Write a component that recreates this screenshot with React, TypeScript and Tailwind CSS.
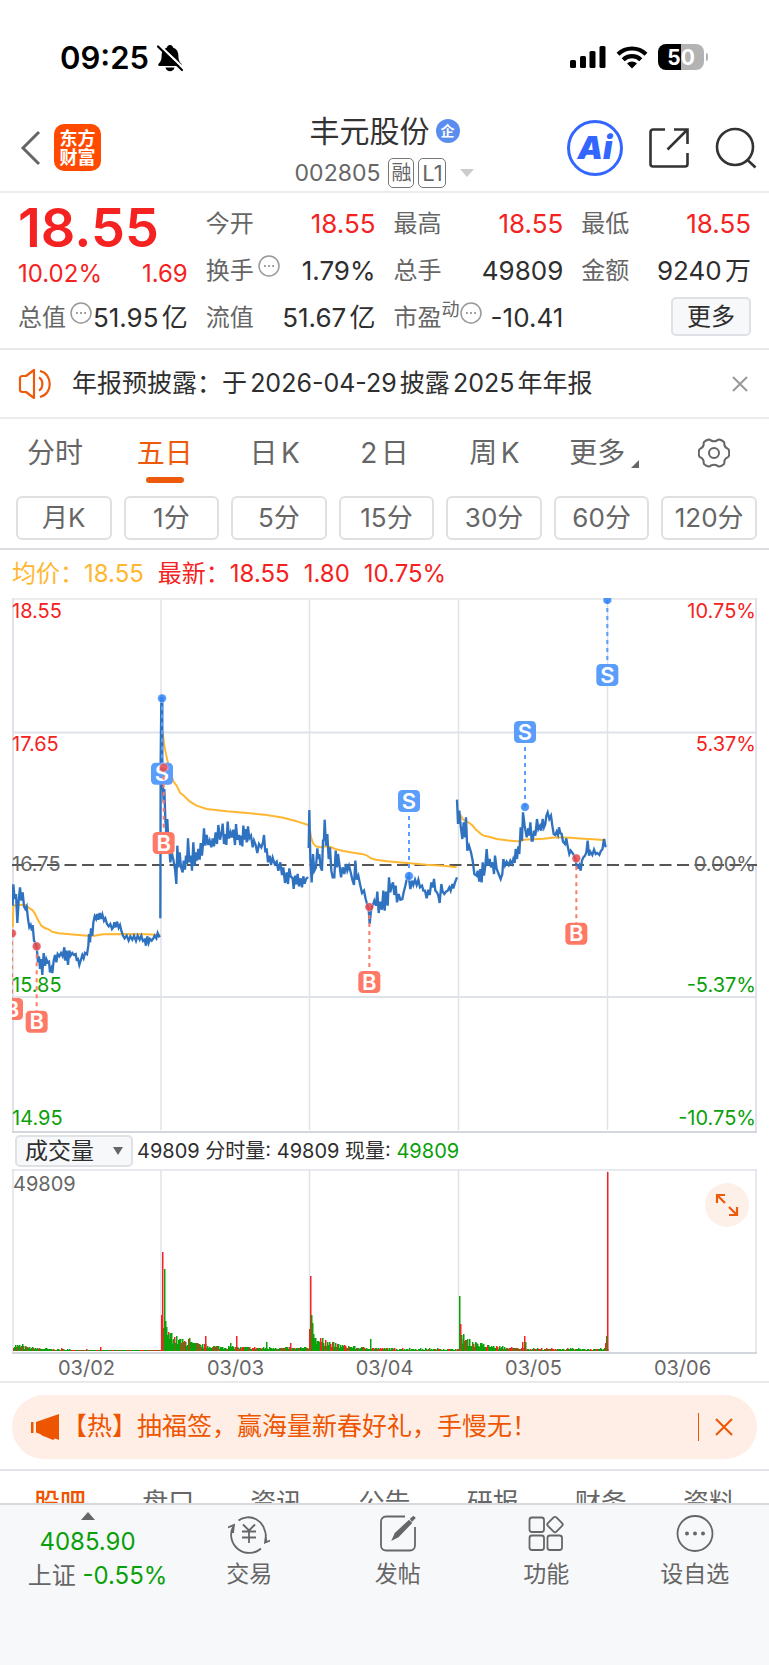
import type { ReactNode } from "react";

const RED = "#f52222";
const GREEN = "#0aa00a";
const BLUE = "#2f72c0";
const AMBER = "#ffb732";

type Session = { shift: string; price: string; average: string };

const sessions: Session[] = [
  {
    shift: "translate(0 690)",
    price:
      "38,260 40,196 44,240 48,225 52,312 56,245 60,205 64,245 68,220 72,262 76,270 80,262 84,300 88,325 92,318 96,335 98,318 102,365 106,372 110,385 114,430 117,412 120,450 123,420 127,468 131,402 135,440 139,420 143,430 147,428 150,460 154,448 157,462 161,425 165,408 169,430 173,405 178,412 183,402 188,412 193,385 196,425 200,395 204,438 208,395 212,410 217,402 222,408 227,405 230,422 234,420 238,438 242,425 247,408 251,418 255,402 261,406 265,380 267,345 270,370 273,328 277,350 280,310 284,292 288,300 291,285 295,302 299,282 303,300 307,286 312,305 316,298 321,315 326,322 331,315 336,330 340,325 343,310 347,325 351,308 356,326 360,318 364,335 369,350 374,358 380,350 386,365 391,352 397,362 402,350 408,366 413,350 419,362 424,350 429,366 434,362 438,380 442,352 446,372 450,360 455,365 460,358 464,350 469,358 473,342 477,352 481,350",
    average:
      "38,325 40,262 46,258 78,258 86,266 98,274 106,286 114,303 124,320 136,328 144,330 156,338 176,343 210,346 262,350 284,350 308,346 380,345 440,346 481,348",
  },
  {
    shift: "translate(0 0)",
    price:
      "481,988 482,520 484,328 487,328 487,560 491,640 493,600 496,690 499,735 502,690 505,760 508,780 511,820 515,790 520,812 525,840 529,885 532,770 535,835 539,790 543,835 548,850 551,815 555,842 558,800 561,825 564,748 568,820 573,800 576,845 580,760 584,830 588,790 591,815 595,780 599,812 602,762 606,800 609,765 612,718 616,770 620,738 625,768 629,755 634,775 638,748 642,772 647,730 651,765 655,708 660,752 665,730 668,704 672,765 676,735 679,768 683,698 687,748 692,730 696,745 700,722 705,768 708,705 712,752 717,738 721,768 724,740 727,772 730,710 734,752 737,720 740,760 744,712 748,748 753,740 758,775 762,755 767,768 772,792 777,765 784,775 789,760 792,738 796,790 800,778 804,820 809,800 813,828 818,806 824,825 830,818 835,845 841,820 846,858 850,835 855,882 860,850 864,885 868,838 872,862 878,868 881,900 885,860 889,886 893,855 897,892 902,868 906,895 910,862 914,884 918,870 924,864",
    average:
      "488,430 493,470 499,500 506,530 514,560 522,580 530,590 540,611 550,619 570,638 590,650 620,660 680,667 750,673 800,678 850,686 890,697 925,708",
  },
  {
    shift: "translate(900 510)",
    price:
      "26,267 28,153 31,300 35,370 39,285 43,335 48,325 52,268 55,300 58,285 62,325 66,335 69,245 72,240 74,182 78,260 82,225 86,300 90,265 94,335 98,355 103,355 107,275 111,325 114,285 119,322 123,355 128,325 133,345 138,315 142,335 147,320 152,340 157,362 162,378 166,305 170,362 175,350 180,375 186,402 192,395 197,420 202,438 206,450 209,495 213,455 218,440 223,425 228,440 232,398 236,462 241,428 246,452 250,395 254,455 258,398 263,440 267,355 271,400 275,380 279,370 283,408 287,380 291,430 296,405 301,422 307,420 311,400 316,380 320,362 326,352 331,390 336,365 340,378 345,362 350,378 355,362 360,385 366,380 370,395 375,395 380,418 385,392 389,408 394,370 398,385 402,360 406,395 411,400 415,410 419,432 424,375 428,398 433,405 438,398 443,395 448,385 452,395 457,375 460,388 465,370 471,355",
    average:
      "30,215 34,238 40,254 48,262 62,265 76,262 92,264 106,270 130,276 160,281 190,286 202,290 212,298 228,302 260,307 320,312 380,317 430,320 470,325",
  },
  {
    shift: "translate(900 510)",
    price:
      "471,122 474,195 478,155 482,200 487,240 491,190 495,235 498,175 502,275 507,260 513,280 518,305 523,345 530,350 533,335 538,368 541,330 545,370 548,310 552,350 556,320 560,270 564,320 569,300 573,325 578,310 582,345 585,290 590,330 596,345 602,360 607,345 610,300 615,320 620,308 626,318 631,305 636,315 640,300 644,312 647,270 651,300 655,262 658,285 662,205 666,245 669,160 674,200 680,235 685,208 688,230 691,190 695,245 698,245 702,215 706,230 711,180 715,210 720,200 724,215 728,180 732,205 736,195 739,170 743,160 748,180 753,170 757,200 761,225 766,228 770,218 774,228 777,205 781,222 785,225 789,248 795,255 799,238 803,262 808,285 812,275 820,285 826,300 830,320 834,325 838,318 842,335 846,305 850,295 855,290 859,280 863,245 867,290 871,278 877,288 882,272 887,285 892,282 898,288 903,275 907,272 912,240 917,265",
    average:
      "480,165 488,180 496,186 505,190 516,198 530,214 544,226 552,230 570,234 590,240 620,244 650,247 665,246 672,242 700,241 730,239 770,235 810,236 850,239 880,241 917,244",
  },
];

type Trade = { side: "B" | "S"; x: number; from: number; to: number };

const trades: Trade[] = [
  { side: "B", x: 36, from: 1033, to: 1260 },
  { side: "B", x: 110, from: 1072, to: 1298 },
  { side: "S", x: 486, from: 328, to: 554 },
  { side: "B", x: 491, from: 536, to: 762 },
  { side: "B", x: 1108, from: 954, to: 1179 },
  { side: "S", x: 1227, from: 861, to: 636 },
  { side: "S", x: 1575, from: 654, to: 429 },
  { side: "B", x: 1729, from: 808, to: 1034 },
  { side: "S", x: 1822, from: 33, to: 258 },
];

function TradeMark({ side, x, from, to }: Trade) {
  const color = side === "B" ? "#ff7a66" : "#5a9dfb";
  const dot = side === "B" ? "#e0484c" : "#2f83f5";
  return (
    <g>
      <line x1={x} x2={x} y1={from} y2={to} stroke={color} strokeWidth="6" strokeDasharray="12 12" />
      <circle cx={x} cy={from} r="13" fill={dot} fillOpacity="0.85" stroke="#fff" strokeOpacity="0.6" strokeWidth="2" />
      <rect x={x - 33} y={to - 33} width="66" height="66" rx="13" fill={color} />
      <text x={x} y={to + 23} textAnchor="middle" fontSize="66" fontWeight="600" fill="#fff">
        {side}
      </text>
    </g>
  );
}

const axisLabels = [
  { y: 20, left: "18.55", right: "10.75%", color: RED },
  { y: 153, left: "17.65", right: "5.37%", color: RED },
  { y: 273, left: "16.75", right: "0.00%", color: "#666" },
  { y: 394, left: "15.85", right: "-5.37%", color: GREEN },
  { y: 527, left: "14.95", right: "-10.75%", color: GREEN },
];

function PriceChart() {
  return (
    <svg viewBox="0 0 745 535" className="block h-auto w-full" role="img" aria-label="五日走势">
      <g stroke="#e0e2ea" strokeWidth="2">
        <path d="M0 1H745" stroke="#ececec" />
        <path d="M1 0V534M744 0V534" />
        <path d="M0 134.500H745M0 399H745" />
        <path d="M149 2V532M297.500 2V532M446.500 2V532M595.500 2V532" strokeWidth="1.500" />
        <path d="M0 534H745" stroke="#d4d6de" />
      </g>
      <path d="M0 267H745" stroke="#555" strokeWidth="2" strokeDasharray="12 5.500" />
      {axisLabels.map((l) => (
        <g key={l.left} fontSize="20" fill={l.color}>
          <text x="0" y={l.y}>{l.left}</text>
          <text x="744" y={l.y} textAnchor="end">{l.right}</text>
        </g>
      ))}
      <g transform="translate(-12 -9) scale(0.333333)">
        {sessions.map((s, i) => (
          <g key={i} transform={s.shift} fill="none">
            <polyline points={s.average} stroke={AMBER} strokeWidth="6" strokeLinejoin="round" />
            <polyline points={s.price} stroke={BLUE} strokeWidth="7" />
          </g>
        ))}
        {trades.map((t) => (
          <TradeMark key={`${t.side}${t.x}`} {...t} />
        ))}
      </g>
    </svg>
  );
}

// [x, height, up] for the bars that stand out of the floor
const peaks: [number, number, boolean][] = [
  [10, 7, false], [49, 3, true], [88, 4, true],
  [149, 36, true], [150, 99, true], [152, 82, false], [153, 30, false], [154, 24, false], [156, 17, false],
  [159, 18, false], [161, 12, false], [167, 12, false], [176, 12, true], [177, 13, false], [193, 15, true],
  [218, 8, false], [224, 15, true], [254, 9, false], [278, 8, true],
  [297, 22, true], [298, 75, true], [299, 36, false], [300, 28, false], [301, 17, false], [303, 13, false],
  [313, 11, true], [358, 12, false], [447, 55, false], [448, 27, true], [449, 16, false], [451, 17, false],
  [453, 11, true], [464, 8, false], [469, 8, false], [510, 9, true], [512, 15, true], [513, 9, false],
  [593, 8, true], [594, 15, false],
];

const floors: [number, number, number][] = [
  // start, height at start, height it settles to
  [1, 6, 1],
  [150, 20, 3],
  [299, 15, 2],
  [448, 13, 2],
];

function buildBars() {
  const bars: { x: number; h: number; up: boolean }[] = [];
  let seed = 7;
  const rand = () => {
    seed = (seed * 16807) % 2147483647;
    return seed / 2147483647;
  };
  for (const [start, high, low] of floors) {
    for (let i = 0; i < 148; i++) {
      const base = low + (high - low) * Math.exp(-i / 22);
      bars.push({ x: start + i, h: Math.max(1, Math.round(base * (0.5 + rand() * 0.8))), up: rand() > 0.7 });
    }
  }
  for (const [x, h, up] of peaks) bars.push({ x, h, up });
  return bars;
}

const bars = buildBars();

function VolumeChart() {
  return (
    <svg viewBox="0 0 745 185" className="block h-auto w-full" role="img" aria-label="成交量">
      <g stroke="#e0e2ea" strokeWidth="1.500">
        <path d="M0 1H745M1 0V184M744 0V184" />
        <path d="M149 2V182M297.500 2V182M446.500 2V182M595.500 2V182" />
        <path d="M0 184H745" stroke="#d4d6de" strokeWidth="2" />
      </g>
      {bars.map((b, i) => (
        <rect key={i} x={b.x} y={182 - b.h} width="1.500" height={b.h} fill={b.up ? RED : GREEN} />
      ))}
      <rect x="595" y="3" width="1.500" height="179" fill={RED} />
      <text x="1" y="22" fontSize="20" fill="#666">49809</text>
    </svg>
  );
}

function MoreDots() {
  return (
    <svg viewBox="0 0 22 22" className="size-[22px] shrink-0" fill="none" stroke="#999" strokeWidth="1.500">
      <circle cx="11" cy="11" r="10" />
      <path d="M6 11h1.800M10.100 11h1.800M14.200 11H16" strokeWidth="2" />
    </svg>
  );
}

type QuoteProps = { label: string; value: string; up?: boolean; sup?: string; dots?: boolean };

function Quote({ label, value, up, sup, dots }: QuoteProps) {
  return (
    <div className="flex h-[47px] items-center whitespace-nowrap">
      <dt className="flex items-center text-2xl text-[#666]">
        {label}
        {sup && <sup className="top-[-8px] text-lg leading-none">{sup}</sup>}
        {dots && (
          <span className={sup ? "-mt-2.5" : "-mt-2.5 ml-1"}>
            <MoreDots />
          </span>
        )}
      </dt>
      <dd className={up ? "ml-auto text-[26px] text-[#f52222]" : "ml-auto text-[26px] text-[#2e2e2e]"}>{value}</dd>
    </div>
  );
}

function StatusBar() {
  return (
    <div className="flex h-[110px] items-center justify-between pr-[61px] pl-[60px] text-black">
      <div className="flex items-center gap-2 pt-1.5">
        <span className="text-[31px] leading-10 font-semibold">09:25</span>
        <svg viewBox="0 0 26 28" className="h-7 w-[26px]">
          <path d="M13 1c1.800 0 2.800 1 3 2.400 3.600 1.200 5.400 4.300 5.400 8.100 0 5 1.300 6.500 3 8.200.8.900.4 2.300-1 2.300H2.600c-1.400 0-1.800-1.400-1-2.300 1.700-1.700 3-3.200 3-8.200 0-3.800 1.800-6.900 5.400-8.100C10.200 2 11.200 1 13 1Z" />
          <path d="M8.500 23.500h9c-.6 2.500-2.300 3.800-4.500 3.800s-3.900-1.300-4.500-3.800Z" />
          <path d="M2.500 1.500 26.500 24" stroke="#fff" strokeWidth="2.400" />
          <path d="M1 2.500 25 26" stroke="#000" strokeWidth="2.200" strokeLinecap="round" />
        </svg>
      </div>
      <div className="flex items-center gap-2.5 pt-1">
        <svg viewBox="0 0 36 24" className="h-6 w-9">
          <rect x="0" y="15" width="6" height="8" rx="1.500" />
          <rect x="10" y="11" width="6" height="12" rx="1.500" />
          <rect x="19.500" y="6" width="6" height="17" rx="1.500" />
          <rect x="29.500" y="1" width="6" height="22" rx="1.500" />
        </svg>
        <svg viewBox="0 0 32 24" className="h-6 w-8" fill="none" stroke="#000" strokeWidth="4.200">
          <path d="M2 9.200a20 20 0 0 1 28 0" />
          <path d="M7.200 14.800a12.600 12.600 0 0 1 17.600 0" />
          <path d="m16 23.500-5-5a7 7 0 0 1 10 0Z" fill="#000" stroke="none" />
        </svg>
        <div className="flex items-center gap-0.5">
          <div className="flex h-[26px] w-[46px] items-center justify-center rounded-lg bg-linear-to-r from-black from-50% to-[#b3b3b3] to-50% text-[21px] leading-none font-bold text-white">
            50
          </div>
          <span className="h-2 w-0.5 rounded-r bg-[#b3b3b3]" />
        </div>
      </div>
    </div>
  );
}

function Header() {
  return (
    <header className="grid h-[83px] grid-cols-[1fr_auto_1fr] items-center border-b-2 border-[#ececec] px-3">
      <div className="flex items-center gap-3 pb-1.5 pl-2">
        <button aria-label="返回">
          <svg viewBox="0 0 22 36" className="h-9 w-[22px]" fill="none" stroke="#666" strokeWidth="3">
            <path d="M19 2 3 18l16 16" />
          </svg>
        </button>
        <div className="flex size-[47px] items-center justify-center rounded-[10px] bg-[#ff4a00] text-center text-lg leading-[19px] font-bold text-white">
          东方
          <br />
          财富
        </div>
      </div>
      <div className="flex flex-col items-center">
        <h1 className="flex items-center gap-1.5 pb-1 text-[30px] leading-10 text-[#333]">
          丰元股份
          <span className="flex size-6 items-center justify-center rounded-full bg-[#5b8def] text-sm font-bold text-white">
            企
          </span>
        </h1>
        <div className="flex items-center gap-1 text-[23px] leading-9 text-[#666]">
          <span className="mr-1">002805</span>
          <span className="flex h-[30px] w-[26px] items-center justify-center rounded-[5px] border border-[#777] text-xl">融</span>
          <span className="flex h-[30px] w-7 items-center justify-center rounded-[5px] border border-[#777] text-[22px]">L1</span>
          <svg viewBox="0 0 14 8" className="ml-2.5 h-2 w-3.5">
            <path d="M0 0h14L7 8Z" fill="#ccc" />
          </svg>
        </div>
      </div>
      <div className="flex items-center justify-end gap-[26px] pb-1.5">
        <button className="flex size-14 items-center justify-center rounded-full border-3 border-[#3366ff] text-[32px] font-black text-[#3366ff] italic">
          Ai
        </button>
        <button aria-label="分享">
          <svg viewBox="0 0 40 40" className="size-10" fill="none" stroke="#333" strokeWidth="2.600">
            <path d="M16 1.500H4A2.500 2.500 0 0 0 1.500 4v32A2.500 2.500 0 0 0 4 38.500h32a2.500 2.500 0 0 0 2.500-2.500V25" />
            <path d="M25 1.500h13.500V16M38 2 18.500 21.500" />
          </svg>
        </button>
        <button aria-label="搜索">
          <svg viewBox="0 0 42 42" className="size-[42px]" fill="none" stroke="#333" strokeWidth="2.600">
            <circle cx="20" cy="20" r="18" />
            <path d="m32.500 33 8 7.500" />
          </svg>
        </button>
      </div>
    </header>
  );
}

function QuoteBoard() {
  return (
    <section className="grid grid-cols-4 gap-x-[18px] border-b-2 border-[#e9e9ec] px-[18px] pt-[7px] pb-[7px] [text-autospace:normal]">
      <div>
        <p className="h-[54px] pt-1 text-[54px] leading-[48px] font-semibold text-[#f52222]">18.55</p>
        <p className="flex h-10 items-center justify-between text-2xl text-[#f52222]">
          <span>10.02%</span>
          <span>1.69</span>
        </p>
        <dl>
          <Quote label="总值" value="51.95亿" dots />
        </dl>
      </div>
      <dl>
        <Quote label="今开" value="18.55" up />
        <Quote label="换手" value="1.79%" dots />
        <Quote label="流值" value="51.67亿" />
      </dl>
      <dl>
        <Quote label="最高" value="18.55" up />
        <Quote label="总手" value="49809" />
        <Quote label="市盈" value="-10.41" sup="动" dots />
      </dl>
      <div>
        <dl>
          <Quote label="最低" value="18.55" up />
          <Quote label="金额" value="9240万" />
        </dl>
        <button className="mt-[3px] ml-auto block h-[39px] w-20 rounded-[5px] border-2 border-[#dfe1e7] bg-[#f7f8fa] text-2xl leading-8 text-[#2e2e2e]">
          更多
        </button>
      </div>
    </section>
  );
}

function Notice() {
  return (
    <section className="flex h-[69px] items-center border-b-2 border-[#ececec] pr-[21px] pl-[18px]">
      <svg viewBox="0 0 34 32" className="h-8 w-[34px]" fill="none" stroke="#ee5a0c" strokeWidth="2.200">
        <path d="M16 2v28l-8-6H4.500A2.500 2.500 0 0 1 2 21.500v-11A2.500 2.500 0 0 1 4.500 8H8Z" strokeLinejoin="round" />
        <path d="M21 9.500c4.500 2.500 4.500 10.500 0 13M22 3c13 2.500 13 23.500 0 26" />
      </svg>
      <p className="ml-5 text-[25px] text-[#2e2e2e] [text-autospace:normal]">年报预披露：于2026-04-29披露2025年年报</p>
      <button aria-label="关闭" className="ml-auto">
        <svg viewBox="0 0 16 16" className="size-4" stroke="#999" strokeWidth="2">
          <path d="m1 1 14 14M15 1 1 15" />
        </svg>
      </button>
    </section>
  );
}

const periods = ["分时", "五日", "日K", "2日", "周K"];
const minutes = ["月K", "1分", "5分", "15分", "30分", "60分", "120分"];

function PeriodTabs() {
  return (
    <nav className="border-b-2 border-[#dcdde3] pb-2">
      <div className="grid h-[77px] grid-cols-7 text-[28px] leading-10 text-[#666] [text-autospace:normal]">
        {periods.map((p) =>
          p === "五日" ? (
            <button key={p} className="flex flex-col items-center pt-3.5 text-[#ee5a0c]">
              {p}
              <span className="mt-1 h-1.5 w-[38px] rounded-full bg-[#ee5a0c]" />
            </button>
          ) : (
            <button key={p} className="flex flex-col items-center pt-3.5">
              {p}
            </button>
          ),
        )}
        <button className="flex items-start justify-center gap-1.5 pt-3.5">
          更多
          <svg viewBox="0 0 8 8" className="mt-[27px] size-2">
            <path d="M8 0v8H0Z" fill="#666" />
          </svg>
        </button>
        <button aria-label="设置" className="flex justify-center pt-[19px]">
          <svg viewBox="0 0 32 30" className="h-[30px] w-8" fill="none" stroke="#666" strokeWidth="2" strokeLinejoin="round">
            <path d="M10.500 1.500q1.500 0 2.500 1 3 1.500 6 0 1-1 2.500-1 2.500.7 4.500 2.500.6 1 .3 2.500.5 3 3.300 4.200 1.200.5 1.400 1.800.4 2.500 0 5-.2 1.300-1.400 1.800-2.800 1.200-3.300 4.200.3 1.500-.3 2.500-2 1.800-4.500 2.500-1.500 0-2.500-1-3-1.500-6 0-1 1-2.500 1-2.500-.7-4.500-2.500-.6-1-.3-2.500-.5-3-3.300-4.200-1.200-.5-1.400-1.800-.4-2.500 0-5 .2-1.300 1.400-1.800 2.800-1.200 3.300-4.200-.3-1.500.3-2.500 2-1.800 4.500-2.500Z" />
            <circle cx="16" cy="15" r="5" />
          </svg>
        </button>
      </div>
      <div className="grid grid-cols-7 gap-3 pr-3 pl-4">
        {minutes.map((m) => (
          <button key={m} className="h-11 rounded-md border-2 border-[#e0e0e0] text-[26px] leading-9 text-[#666]">
            {m}
          </button>
        ))}
      </div>
    </nav>
  );
}

const dates = ["03/02", "03/03", "03/04", "03/05", "03/06"];

function Charts() {
  return (
    <section className="border-b-2 border-[#e9e9ec] px-3">
      <p className="flex h-12 items-center gap-3.5 text-2xl whitespace-nowrap text-[#f52222]">
        <span className="text-[#ffb732]">均价：18.55</span>
        <span>最新：18.55</span>
        <span>1.80</span>
        <span>10.75%</span>
      </p>
      <PriceChart />
      <div className="flex h-9 items-center pl-[3px] text-xl text-[#2e2e2e]">
        <div className="relative mr-1">
          <select
            aria-label="指标"
            className="h-8 w-[118px] appearance-none rounded-[5px] border-2 border-[#dfe1e7] bg-[#f7f8fa] pl-2 text-[23px] leading-7"
          >
            <option>成交量</option>
          </select>
          <svg viewBox="0 0 10 8" className="pointer-events-none absolute top-3 right-2.5 h-2 w-2.5">
            <path d="M0 0h10L5 8Z" fill="#666" />
          </svg>
        </div>
        <p className="whitespace-nowrap">
          49809 分时量: 49809 现量: <span className="text-[#0aa00a]">49809</span>
        </p>
      </div>
      <div className="relative">
        <VolumeChart />
        <button aria-label="展开" className="absolute top-3.5 right-2 flex size-11 items-center justify-center rounded-full bg-[#fdf0e9]">
          <svg viewBox="0 0 24 24" className="size-6" fill="none" stroke="#ee5a0c" strokeWidth="2.200">
            <path d="M10 2H2v8M2.500 2.500l7.500 7.500M14 22h8v-8M21.500 21.500 14 14" />
          </svg>
        </button>
      </div>
      <div className="grid h-[27px] grid-cols-5 text-center text-xl text-[#666]">
        {dates.map((d) => (
          <span key={d}>{d}</span>
        ))}
      </div>
    </section>
  );
}

function Promo() {
  return (
    <section className="border-b-2 border-[#e3e4ea] px-3 pt-3 pb-2.5">
      <div className="flex h-16 items-center rounded-full bg-[#feeee6] pr-6 pl-[18px] text-[#ee5500]">
        <svg viewBox="0 0 32 28" className="h-7 w-8" fill="currentColor">
          <path d="M1 9h2.500v11H1zM6 9 29 1v26l-4-1.500-2 1.500-7-3-3-1-3-2-4-1.500Z" />
        </svg>
        <p className="text-[25px] whitespace-nowrap">【热】抽福签，赢海量新春好礼，手慢无！</p>
        <span className="mr-4 ml-auto h-7 w-px bg-current" />
        <button aria-label="关闭">
          <svg viewBox="0 0 18 18" className="size-[18px]" stroke="currentColor" strokeWidth="2">
            <path d="m1 1 16 16M17 1 1 17" />
          </svg>
        </button>
      </div>
    </section>
  );
}

const infoTabs = ["盘口", "资讯", "公告", "研报", "财务", "资料"];

function NavItem({ label, children }: { label: string; children: ReactNode }) {
  return (
    <button className="flex flex-1 flex-col items-center gap-1 pt-[9px]">
      <svg viewBox="0 0 42 40" className="h-10 w-[42px]" fill="none" stroke="#666" strokeWidth="1.800">
        {children}
      </svg>
      <span className="text-[23px] leading-8 text-[#666]">{label}</span>
    </button>
  );
}

function BottomNav() {
  return (
    <nav className="fixed inset-x-0 bottom-0 flex h-[162px] items-start border-t-2 border-[#d8dade] bg-[#f7f8fa]">
      <button className="flex w-[175px] flex-col items-center pt-[7px] whitespace-nowrap">
        <svg viewBox="0 0 14 8" className="h-2 w-3.5">
          <path d="M0 8h14L7 0Z" fill="#666" />
        </svg>
        <span className="mt-1 text-2xl leading-9 text-[#0aa00a]">4085.90</span>
        <span className="pl-5 text-2xl leading-8 text-[#0aa00a]">
          <span className="text-[#666]">上证</span> -0.55%
        </span>
      </button>
      <NavItem label="交易">
        <path d="M10.500 6.500C20-1 39 4 38 27M33 34.500A18 18 0 0 1 5 13M0 13.500l6-2.500-1 8M42 26.500l-5 2 1-8" />
        <path d="m15 10.500 6 6 6-6M14 17.500h14M14 23.500h14M21 17v12" />
      </NavItem>
      <NavItem label="发帖">
        <path d="M28 2.500H9A5 5 0 0 0 4 7.500v24a5 5 0 0 0 5 5h24a5 5 0 0 0 5-5V13" />
        <path d="m16 25 2.500-5.500L32 7l2 2-13 13.500ZM34 5l2.500-2 1 1-2.500 2.500Z" fill="#666" />
      </NavItem>
      <NavItem label="功能">
        <rect x="4.500" y="3.500" width="14.500" height="14.500" rx="2.500" />
        <rect x="4.500" y="21.500" width="14.500" height="14.500" rx="2.500" />
        <rect x="22.500" y="21.500" width="14.500" height="14.500" rx="2.500" />
        <rect x="24" y="4.500" width="12" height="12" rx="2" transform="rotate(45 30 10.500)" />
      </NavItem>
      <NavItem label="设自选">
        <circle cx="21" cy="19.500" r="17.500" />
        <g fill="#666" stroke="none">
          <circle cx="13" cy="19.500" r="2" />
          <circle cx="21" cy="19.500" r="2" />
          <circle cx="29" cy="19.500" r="2" />
        </g>
      </NavItem>
    </nav>
  );
}

export default function App() {
  return (
    <div className="min-h-screen bg-white pb-16 font-['Inter','Noto_Sans_CJK_SC',sans-serif]">
      <StatusBar />
      <Header />
      <QuoteBoard />
      <Notice />
      <PeriodTabs />
      <Charts />
      <Promo />
      <nav className="grid grid-cols-7 px-1.5 pt-3 text-[26px] leading-10 text-[#666]">
        <button className="font-medium text-[#ee5500]">股吧</button>
        {infoTabs.map((t) => (
          <button key={t}>{t}</button>
        ))}
      </nav>
      <BottomNav />
    </div>
  );
}
